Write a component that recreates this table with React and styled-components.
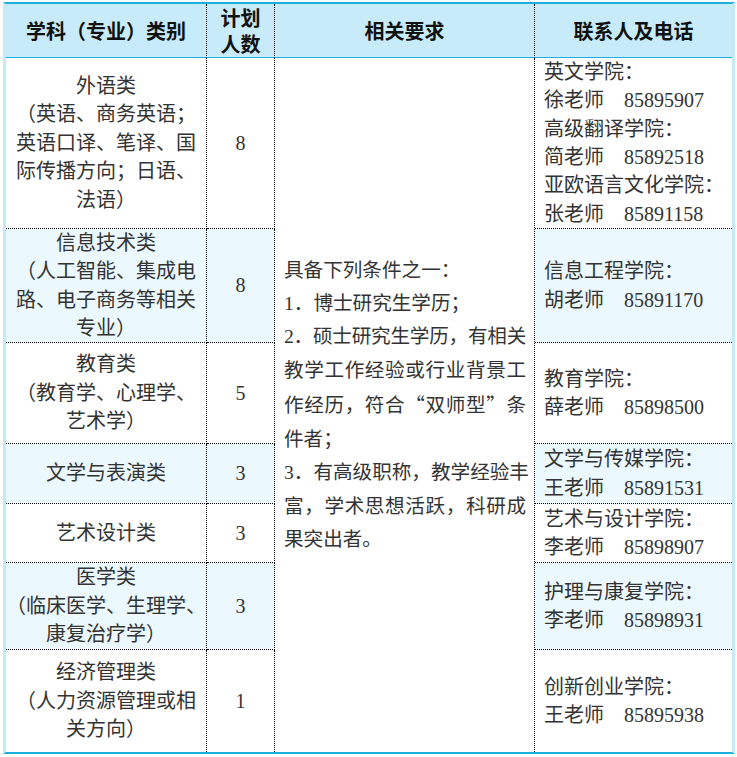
import React from 'react'
import styled, { createGlobalStyle, css } from 'styled-components'

const GlobalStyle = createGlobalStyle`
  html, body {
    margin: 0;
    padding: 0;
    background: #fff;
  }
  body {
    font-family: "Liberation Serif", "Noto Sans CJK SC", serif;
    color: #333;
  }
`

const TEAL = '#1cb0dc'
const PALE = '#c4eaf8'
const HEAD_BG = '#c7ebf8'
const SHADE_BG = '#ebf8fe'

const rows = [
  {
    lines: ['外语类', '（英语、商务英语；', '英语口译、笔译、国', '际传播方向；日语、', '法语）'],
    count: '8',
    contacts: [
      { college: '英文学院：', name: '徐老师', phone: '85895907' },
      { college: '高级翻译学院：', name: '简老师', phone: '85892518' },
      { college: '亚欧语言文化学院：', name: '张老师', phone: '85891158' },
    ],
  },
  {
    lines: ['信息技术类', '（人工智能、集成电', '路、电子商务等相关', '专业）'],
    count: '8',
    contacts: [{ college: '信息工程学院：', name: '胡老师', phone: '85891170' }],
  },
  {
    lines: ['教育类', '（教育学、心理学、', '艺术学）'],
    count: '5',
    contacts: [{ college: '教育学院：', name: '薛老师', phone: '85898500' }],
  },
  {
    lines: ['文学与表演类'],
    count: '3',
    contacts: [{ college: '文学与传媒学院：', name: '王老师', phone: '85891531' }],
  },
  {
    lines: ['艺术设计类'],
    count: '3',
    contacts: [{ college: '艺术与设计学院：', name: '李老师', phone: '85898907' }],
  },
  {
    lines: ['医学类', '（临床医学、生理学、', '康复治疗学）'],
    count: '3',
    contacts: [{ college: '护理与康复学院：', name: '李老师', phone: '85898931' }],
  },
  {
    lines: ['经济管理类', '（人力资源管理或相', '关方向）'],
    count: '1',
    contacts: [{ college: '创新创业学院：', name: '王老师', phone: '85895938' }],
  },
]

const App = () => {
  return (
    <Page lang="zh-CN">
      <GlobalStyle />
      <Sheet>
        <HeadCell>学科（专业）类别</HeadCell>
        <HeadCell>
          <Line>计划</Line>
          <Line>人数</Line>
        </HeadCell>
        <HeadCell>相关要求</HeadCell>
        <HeadCell last>联系人及电话</HeadCell>

        <Requirement>
          <ReqLine>具备下列条件之一：</ReqLine>
          <ReqLine>1．博士研究生学历；</ReqLine>
          <ReqLine full tight>2．硕士研究生学历，有相关</ReqLine>
          <ReqLine full>教学工作经验或行业背景工</ReqLine>
          <ReqLine full>
            作经历，符合<Quote>“</Quote>双师型<Quote>”</Quote>条
          </ReqLine>
          <ReqLine>件者；</ReqLine>
          <ReqLine full>3．有高级职称，教学经验丰</ReqLine>
          <ReqLine full>富，学术思想活跃，科研成</ReqLine>
          <ReqLine>果突出者。</ReqLine>
        </Requirement>

        {rows.map((row, i) => {
          const shade = i % 2 === 1
          const end = i === rows.length - 1
          return (
            <React.Fragment key={i}>
              <SubjectCell shade={shade} end={end}>
                {row.lines.map(l => (
                  <Line key={l}>{l}</Line>
                ))}
              </SubjectCell>
              <CountCell shade={shade} end={end}>
                {row.count}
              </CountCell>
              <ContactCell shade={shade} end={end}>
                {row.contacts.map(c => (
                  <React.Fragment key={c.college}>
                    <Line>{c.college}</Line>
                    <Line>
                      {c.name}
                      {'\u3000'}
                      {c.phone}
                    </Line>
                  </React.Fragment>
                ))}
              </ContactCell>
            </React.Fragment>
          )
        })}
      </Sheet>
    </Page>
  )
}

const Page = styled.div`
  padding: 2px 0 0 3px;
`

const Sheet = styled.div`
  width: 732px;
  box-sizing: border-box;
  border-top: 2px solid ${TEAL};
  border-bottom: 2px solid ${TEAL};
  border-left: 3px solid ${PALE};
  border-right: 3px solid ${PALE};
  display: grid;
  grid-template-columns: 201px 68px 260px 197px;
  grid-template-rows: 54px 171px 114px 101px 60px 59px 87px 102px;
`

const HeadCell = styled.div`
  box-sizing: border-box;
  background: ${HEAD_BG};
  border-bottom: 1px solid ${TEAL};
  border-right: ${({ last }) => (last ? 'none' : '1px dotted #000')};
  display: flex;
  flex-direction: column;
  align-items: center;
  justify-content: center;
  font-family: "Noto Sans CJK SC", sans-serif;
  font-weight: 700;
  font-size: 20px;
  line-height: 26px;
  color: #111;
`

const bodyCell = css`
  box-sizing: border-box;
  background: ${({ shade }) => (shade ? SHADE_BG : '#fff')};
  border-bottom: ${({ end }) => (end ? 'none' : '1px dotted #000')};
  display: flex;
  flex-direction: column;
  justify-content: center;
  font-size: 20px;
  line-height: 28.4px;
`

const SubjectCell = styled.div`
  ${bodyCell}
  border-right: 1px dotted #000;
  align-items: center;
  text-align: center;
`

const CountCell = styled.div`
  ${bodyCell}
  border-right: 1px dotted #000;
  align-items: center;
`

const ContactCell = styled.div`
  ${bodyCell}
  align-items: flex-start;
  padding-left: 9px;
`

const Line = styled.span`
  display: block;
  white-space: nowrap;
`

const Requirement = styled.div`
  grid-column: 3;
  grid-row: 2 / span 7;
  box-sizing: border-box;
  border-right: 1px dotted #000;
  background: #fff;
  padding: 0 8px 0 9px;
  display: flex;
  flex-direction: column;
  justify-content: center;
  font-size: 19.6px;
  line-height: 33.4px;
`

const ReqLine = styled.span`
  display: block;
  white-space: nowrap;
  text-align: justify;
  text-align-last: ${({ full }) => (full ? 'justify' : 'left')};
  letter-spacing: ${({ tight }) => (tight ? '-0.3px' : '0')};
`

const Quote = styled.span`
  font-family: "Noto Sans CJK SC", sans-serif;
  font-feature-settings: "fwid";
`

export default App
